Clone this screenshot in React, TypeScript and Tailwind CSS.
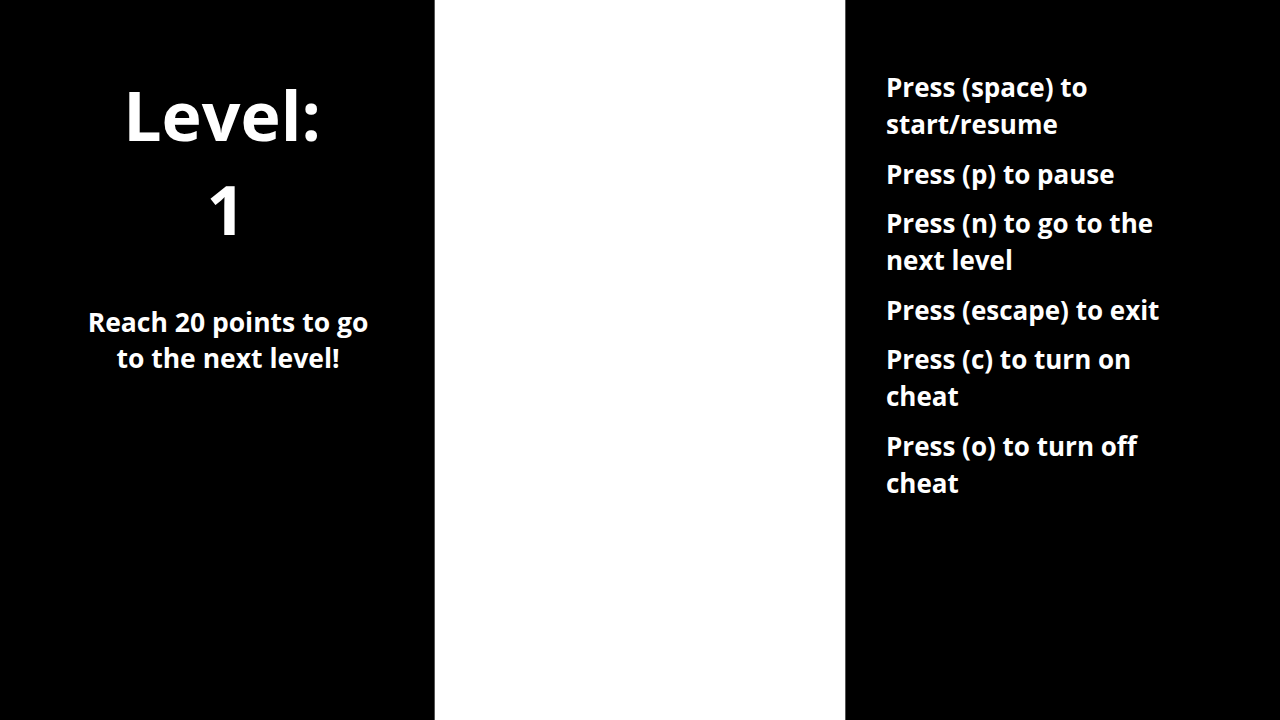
export default function App() {
  const controls = [
    "Press (space) to start/resume",
    "Press (p) to pause",
    "Press (n) to go to the next level",
    "Press (escape) to exit",
    "Press (c) to turn on cheat",
    "Press (o) to turn off cheat",
  ];

  return (
    <div
      className="flex h-[720px] w-[1280px] overflow-hidden bg-white font-bold text-white"
      style={{ fontFamily: '"Open Sans", sans-serif' }}
    >
      <div className="flex w-[434px] flex-col items-center bg-black pt-[68px]">
        <h1 className="ml-[10px] w-[220px] text-center text-[68px] leading-[94px]">
          Level: <span className="relative left-[4px]">1</span>
        </h1>
        <p className="ml-[22px] mt-[48px] w-[300px] text-center text-[26.5px] leading-[36px]">
          Reach 20 points to go to the next level!
        </p>
      </div>
      <div className="w-px bg-[#555]" />
      <div className="flex-1 bg-white" />
      <div className="w-px bg-[#555]" />
      <div className="w-[434px] bg-black pl-[40px] pt-[69px]">
        <div className="flex w-[310px] flex-col gap-[12.6px]">
          {controls.map((c, i) => (
            <p key={i} className="text-[26px] leading-[37px]">
              {c}
            </p>
          ))}
        </div>
      </div>
    </div>
  );
}
